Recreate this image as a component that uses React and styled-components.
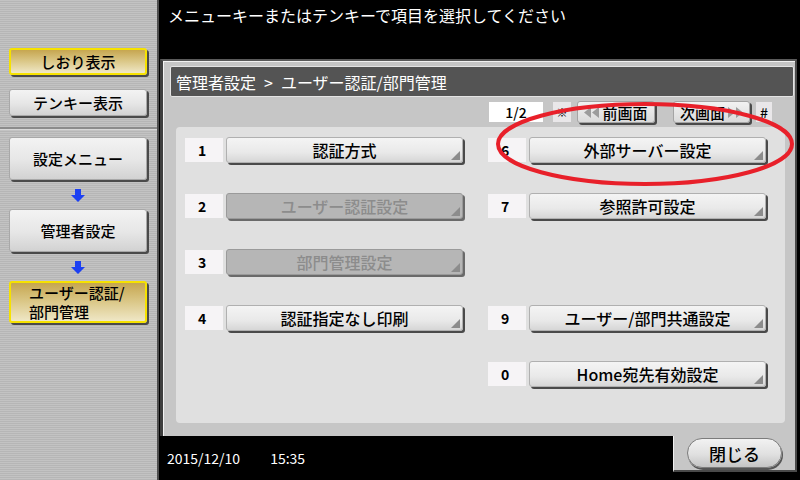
import React from "react";
import styled, { createGlobalStyle, css } from "styled-components";

const FONT = `"Noto Sans CJK JP", "Noto Sans", sans-serif`;

const Global = createGlobalStyle`
  html, body { margin: 0; padding: 0; background: #000; }
  body { font-family: ${FONT}; }
  * { box-sizing: border-box; }
`;

const Screen = styled.div`
  position: relative;
  width: 800px;
  height: 480px;
  display: grid;
  grid-template-columns: 159px 641px;
  background: #000;
  overflow: hidden;
  font-family: ${FONT};
`;

/* ---------- Sidebar ---------- */
const Sidebar = styled.aside`
  display: flex;
  flex-direction: column;
  border-right: 2px solid #4e4e4e;
  background: repeating-linear-gradient(
    to bottom,
    #c3c3c3 0px,
    #c3c3c3 1px,
    #b6b6b6 1px,
    #b6b6b6 2px
  );
`;

const SideTop = styled.div`
  height: 127px;
  padding: 48px 0 0 9px;
  display: flex;
  flex-direction: column;
  gap: 14px;
`;

const SideBottom = styled.div`
  flex: 1;
  border-top: 2px solid #8c8c8c;
  box-shadow: inset 0 1px 0 #d8d8d8;
  padding: 8px 0 0 9px;
  display: flex;
  flex-direction: column;
`;

const goldLook = css`
  background: linear-gradient(to bottom, #c6a650 0%, #d9c583 45%, #efe7c6 100%);
  border: 2px solid #f6e200;
`;

const SideButton = styled.div`
  width: 138px;
  height: ${(p) => p.$h}px;
  border-radius: 3px;
  display: flex;
  flex-direction: column;
  align-items: ${(p) => (p.$left ? "flex-start" : "center")};
  justify-content: center;
  padding-left: ${(p) => (p.$left ? "18px" : "0")};
  font-size: 15px;
  line-height: 18px;
  font-weight: 500;
  color: #000;
  box-shadow: 2px 2px 0 #4a4a4a;
  ${(p) =>
    p.$gold
      ? goldLook
      : css`
          background: linear-gradient(to bottom, #f3f3f3 0%, #e6e6e6 55%, #d2d2d2 100%);
          border: 1px solid #a8a8a8;
        `}
`;

const Line = styled.span`
  display: block;
  line-height: 20px;
  height: 19px;
`;

const ArrowSlot = styled.div`
  width: 138px;
  height: 29px;
  display: flex;
  align-items: center;
  justify-content: center;
  padding-top: 2px;
`;

const DownArrow = () => (
  <svg width="14" height="13" viewBox="0 0 14 13">
    <path d="M4 0 H10 V6 H14 L7 13 L0 6 H4 Z" fill="#1c40f2" />
  </svg>
);

/* ---------- Main ---------- */
const Main = styled.main`
  display: flex;
  flex-direction: column;
`;

const Prompt = styled.div`
  height: 59px;
  padding: 4px 0 0 9px;
  color: #fff;
  font-size: 16px;
  line-height: 22px;
`;

const Panel = styled.section`
  width: 637px;
  height: 377px;
  margin-left: 1px;
  background: #c6c6c6;
  border-left: 3px solid #3e3e3e;
  border-top: 2px solid #5a5a5a;
  border-right: 2px solid #4a4a4a;
  box-shadow: inset 1px 1px 0 #f2f2f2;
  display: flex;
  flex-direction: column;
`;

const TitleBar = styled.div`
  height: 31px;
  margin: 5px 1px 0 7px;
  background: #545454;
  border: 1px solid #e4e4e4;
  border-radius: 2px;
  color: #fff;
  font-size: 16px;
  display: flex;
  align-items: center;
  padding-left: 5px;
  gap: 8px;
`;

const PageRow = styled.div`
  height: 24px;
  margin: 3px 23px 0 0;
  display: flex;
  justify-content: flex-end;
  align-items: center;
`;

const PageBox = styled.div`
  width: ${(p) => p.$w}px;
  height: 20px;
  margin-left: ${(p) => p.$gap}px;
  background: ${(p) => (p.$light ? "#e9e7e9" : "#fff")};
  color: #000;
  font-size: ${(p) => p.$fs || 14}px;
  font-weight: 500;
  display: flex;
  align-items: center;
  justify-content: center;
`;

const NavButton = styled.div`
  width: ${(p) => p.$w}px;
  height: 22px;
  margin-left: ${(p) => p.$gap}px;
  border-radius: 3px;
  background: linear-gradient(to bottom, #f2f2f2, #dadada);
  border: 1px solid #a4a4a4;
  box-shadow: 2px 2px 0 #4a4a4a;
  display: flex;
  align-items: center;
  justify-content: center;
  gap: 3px;
  font-size: 15px;
  font-weight: 500;
  color: #000;
`;

const DoubleArrow = ({ dir }) => (
  <svg width="15" height="11" viewBox="0 0 15 11">
    {dir === "left" ? (
      <path d="M7 0 V11 L0 5.5 Z M15 0 V11 L8 5.5 Z" fill="#9c9c9c" />
    ) : (
      <path d="M0 0 V11 L7 5.5 Z M8 0 V11 L15 5.5 Z" fill="#9c9c9c" />
    )}
  </svg>
);

const Content = styled.div`
  height: 296px;
  margin: 3px 10px 0 13px;
  background: #e0e0e0;
  border-radius: 4px;
  padding: 10px 0 0 9px;
  display: grid;
  grid-template-columns: 279px 279px;
  column-gap: 24px;
  row-gap: 28px;
  grid-auto-flow: column;
  grid-template-rows: repeat(5, 28px);
`;

const Row = styled.div`
  display: flex;
  align-items: flex-start;
  gap: 3px;
`;

const NumBox = styled.div`
  width: 38px;
  height: 24px;
  margin-top: 1px;
  background: #f6f4f6;
  color: #000;
  font-size: 14px;
  font-weight: 700;
  display: flex;
  align-items: center;
  padding-left: 13px;
`;

const MenuButton = styled.div`
  position: relative;
  width: 237px;
  height: 26px;
  border-radius: 3px;
  display: flex;
  align-items: center;
  justify-content: center;
  font-size: 16px;
  font-weight: 500;
  ${(p) =>
    p.$disabled
      ? css`
          background: #b6b6b6;
          border: 1px solid #9a9a9a;
          color: #8c8c8c;
          box-shadow: 2px 2px 0 #6a6a6a;
        `
      : css`
          background: linear-gradient(to bottom, #f4f4f4 0%, #e9e9e9 60%, #d6d6d6 100%);
          border: 1px solid #b0b0b0;
          color: #000;
          box-shadow: 2px 2px 0 #4a4a4a;
        `}
  &::after {
    content: "";
    position: absolute;
    right: 2px;
    bottom: 2px;
    width: 0;
    height: 0;
    border-left: 9px solid transparent;
    border-bottom: 9px solid #8c8c8c;
  }
`;

/* ---------- Footer ---------- */
const Footer = styled.div`
  flex: 1;
  display: flex;
  align-items: flex-start;
`;

const DateTime = styled.div`
  padding: 12px 0 0 8px;
  color: #fff;
  font-size: 14px;
  display: flex;
  gap: 30px;
`;

const CloseTab = styled.div`
  margin-left: auto;
  margin-right: 3px;
  width: 124px;
  height: 36px;
  background: #c6c6c6;
  border-left: 1px solid #f0f0f0;
  border-right: 2px solid #4a4a4a;
  border-bottom: 2px solid #4a4a4a;
  display: flex;
  justify-content: center;
  padding-top: 2px;
`;

const CloseButton = styled.div`
  width: 95px;
  height: 30px;
  border-radius: 15px;
  background: linear-gradient(to bottom, #f2f2f2 0%, #e0e0e0 55%, #c4c4c4 100%);
  border: 1px solid #7c7c7c;
  box-shadow: 1px 2px 0 #555;
  display: flex;
  align-items: center;
  justify-content: center;
  font-size: 17px;
  font-weight: 500;
  color: #000;
`;

/* annotation drawn over the screenshot */
const Annotation = styled.svg`
  position: absolute;
  left: 0;
  top: 0;
  width: 800px;
  height: 480px;
  pointer-events: none;
`;

const leftItems = [
  { n: "1", t: "認証方式" },
  { n: "2", t: "ユーザー認証設定", d: true },
  { n: "3", t: "部門管理設定", d: true },
  { n: "4", t: "認証指定なし印刷" },
  null,
];
const rightItems = [
  { n: "6", t: "外部サーバー設定" },
  { n: "7", t: "参照許可設定" },
  null,
  { n: "9", t: "ユーザー/部門共通設定" },
  { n: "0", t: "Home宛先有効設定" },
];

export default function App() {
  const items = [...leftItems, ...rightItems];
  return (
    <>
      <Global />
      <Screen>
        <Sidebar>
          <SideTop>
            <SideButton $h={27} $gold>しおり表示</SideButton>
            <SideButton $h={27}>テンキー表示</SideButton>
          </SideTop>
          <SideBottom>
            <SideButton $h={43}>設定メニュー</SideButton>
            <ArrowSlot>
              <DownArrow />
            </ArrowSlot>
            <SideButton $h={43}>管理者設定</SideButton>
            <ArrowSlot>
              <DownArrow />
            </ArrowSlot>
            <SideButton $h={42} $gold $left>
              <Line>ユーザー認証/</Line>
              <Line>部門管理</Line>
            </SideButton>
          </SideBottom>
        </Sidebar>
        <Main>
          <Prompt>メニューキーまたはテンキーで項目を選択してください</Prompt>
          <Panel>
            <TitleBar>
              <span>管理者設定</span>
              <span>&gt;</span>
              <span>ユーザー認証/部門管理</span>
            </TitleBar>
            <PageRow>
              <PageBox $w={54} $gap={0}>1/2</PageBox>
              <PageBox $w={18} $gap={10} $light $fs={11}>※</PageBox>
              <NavButton $w={78} $gap={6}>
                <DoubleArrow dir="left" />
                前画面
              </NavButton>
              <NavButton $w={77} $gap={18}>
                次画面
                <DoubleArrow dir="right" />
              </NavButton>
              <PageBox $w={16} $gap={6} $light>#</PageBox>
            </PageRow>
            <Content>
              {items.map((it, i) =>
                it ? (
                  <Row key={i}>
                    <NumBox>{it.n}</NumBox>
                    <MenuButton $disabled={it.d}>{it.t}</MenuButton>
                  </Row>
                ) : (
                  <div key={i} />
                )
              )}
            </Content>
          </Panel>
          <Footer>
            <DateTime>
              <span>2015/12/10</span>
              <span>15:35</span>
            </DateTime>
            <CloseTab>
              <CloseButton>閉じる</CloseButton>
            </CloseTab>
          </Footer>
        </Main>
        <Annotation viewBox="0 0 800 480">
          <ellipse cx="645" cy="144" rx="147" ry="40" fill="none" stroke="#e8202a" strokeWidth="4" />
        </Annotation>
      </Screen>
    </>
  );
}
